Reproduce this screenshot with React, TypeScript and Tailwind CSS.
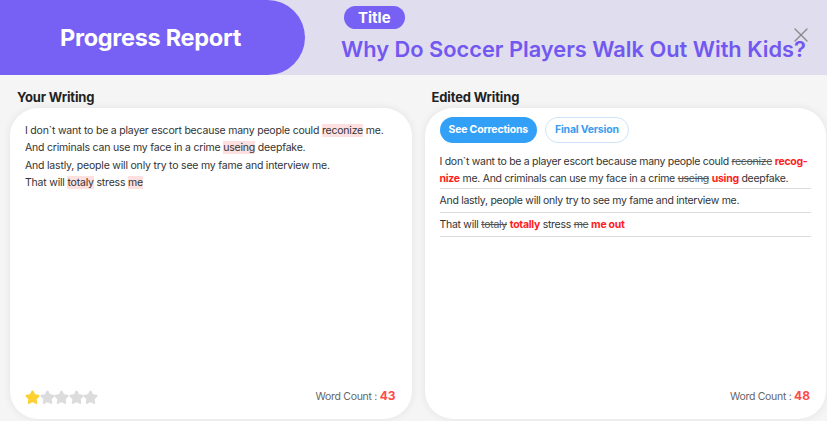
import { Star, X } from "lucide-react";

const font = { fontFamily: "Inter, 'Noto Sans', sans-serif" };

function Hl({ children }: { children: React.ReactNode }) {
  return <span className="bg-[#fde0df]">{children}</span>;
}

function Del({ children }: { children: React.ReactNode }) {
  return <span className="line-through text-[#555]">{children}</span>;
}

function Fix({ children }: { children: React.ReactNode }) {
  return <span className="font-bold text-[#ff1d1d]">{children}</span>;
}

function WordCount({ n }: { n: number }) {
  return (
    <p className="text-[10.5px] tracking-[-0.3px] text-[#666]">
      Word Count : <span className="font-bold text-[12px] tracking-normal text-[#ff4a4a]">{n}</span>
    </p>
  );
}

export default function App() {
  return (
    <div className="w-[827px] h-[421px] bg-[#f5f5f5] overflow-hidden" style={font}>
      {/* header */}
      <div className="h-[75px] bg-[#dfddee] flex relative">
        <div className="w-[305px] h-full bg-[#7760f4] rounded-r-full flex items-center justify-center">
          <h1 className="text-white font-bold text-[23.5px] tracking-[-0.3px] pr-[4px]">Progress Report</h1>
        </div>
        <div className="pl-[36px] pt-[6px] flex flex-col items-start">
          <span className="bg-[#7760f4] text-white font-bold text-[15px] leading-[23px] px-[14px] rounded-full ml-[3px]">
            Title
          </span>
          <h2 className="text-[#7258f0] font-semibold text-[21.8px] leading-[30px] mt-[5px]">
            Why Do Soccer Players Walk Out With Kids?
          </h2>
        </div>
        <X className="absolute right-[14px] top-[23px] text-[#888]" size={24} strokeWidth={1.3} />
      </div>

      {/* body */}
      <div className="grid grid-cols-2 gap-[13px] pl-[10px] pr-[1px]">
        <section className="flex flex-col">
          <h3 className="text-[13px] tracking-[-0.15px] font-bold text-[#222] pl-[7px] mt-[13px] h-[20px]">Your Writing</h3>
          <div className="bg-white rounded-[28px] shadow-[0_0_8px_rgba(0,0,0,0.08)] h-[311px] flex flex-col px-[15px] pt-[14px] pb-[14px]">
            <div className="text-[10.5px] tracking-[-0.2px] leading-[17.4px] text-[#333] flex-1">
              <p>I don`t want to be a player escort because many people could <Hl>reconize</Hl> me.</p>
              <p>And criminals can use my face in a crime <Hl>useing</Hl> deepfake.</p>
              <p>And lastly, people will only try to see my fame and interview me.</p>
              <p>That will <Hl>totaly</Hl> stress <Hl>me</Hl></p>
            </div>
            <div className="flex items-center justify-between">
              <div className="flex pt-[3px]">
                {[0, 1, 2, 3, 4].map((i) => (
                  <Star
                    key={i}
                    size={15}
                    strokeWidth={2.5}
                    strokeLinejoin="round"
                    className={i === 0 ? "text-[#fcd232] fill-[#fcd232] -mr-[0.5px]" : "text-[#dcdcdc] fill-[#dcdcdc] -mr-[0.5px]"}
                  />
                ))}
              </div>
              <div className="pr-[1px]">
                <WordCount n={43} />
              </div>
            </div>
          </div>
        </section>

        <section className="flex flex-col">
          <h3 className="text-[13px] tracking-[-0.15px] font-bold text-[#222] pl-[7px] mt-[13px] h-[20px]">Edited Writing</h3>
          <div className="bg-white rounded-[28px] shadow-[0_0_8px_rgba(0,0,0,0.08)] h-[311px] flex flex-col px-[15px] pt-[9px] pb-[14px]">
            <div className="flex gap-[8px]">
              <button className="bg-[#33a0f8] text-white font-bold text-[10.5px] tracking-[-0.2px] h-[26px] px-[9px] rounded-full">
                See Corrections
              </button>
              <button className="bg-white text-[#3a9cf0] font-bold text-[10.5px] tracking-[-0.2px] h-[26px] px-[9px] rounded-full border border-[#cfe4fb]">
                Final Version
              </button>
            </div>
            <div className="text-[10.5px] tracking-[-0.28px] leading-[17px] text-[#333] flex-1 mt-[10px]">
              <p className="border-b border-[#dcdcdc] pb-[1px]">
                I don`t want to be a player escort because many people could <Del>reconize</Del> <Fix>recog-</Fix>
                <br />
                <Fix>nize</Fix> me. And criminals can use my face in a crime <Del>useing</Del> <Fix>using</Fix> deepfake.
              </p>
              <p className="border-b border-[#dcdcdc] py-[3px]">And lastly, people will only try to see my fame and interview me.</p>
              <p className="border-b border-[#dcdcdc] py-[3px]">
                That will <Del>totaly</Del> <Fix>totally</Fix> stress <Del>me</Del> <Fix>me out</Fix>
              </p>
            </div>
            <div className="flex justify-end pr-[1px]">
              <WordCount n={48} />
            </div>
          </div>
        </section>
      </div>
    </div>
  );
}
